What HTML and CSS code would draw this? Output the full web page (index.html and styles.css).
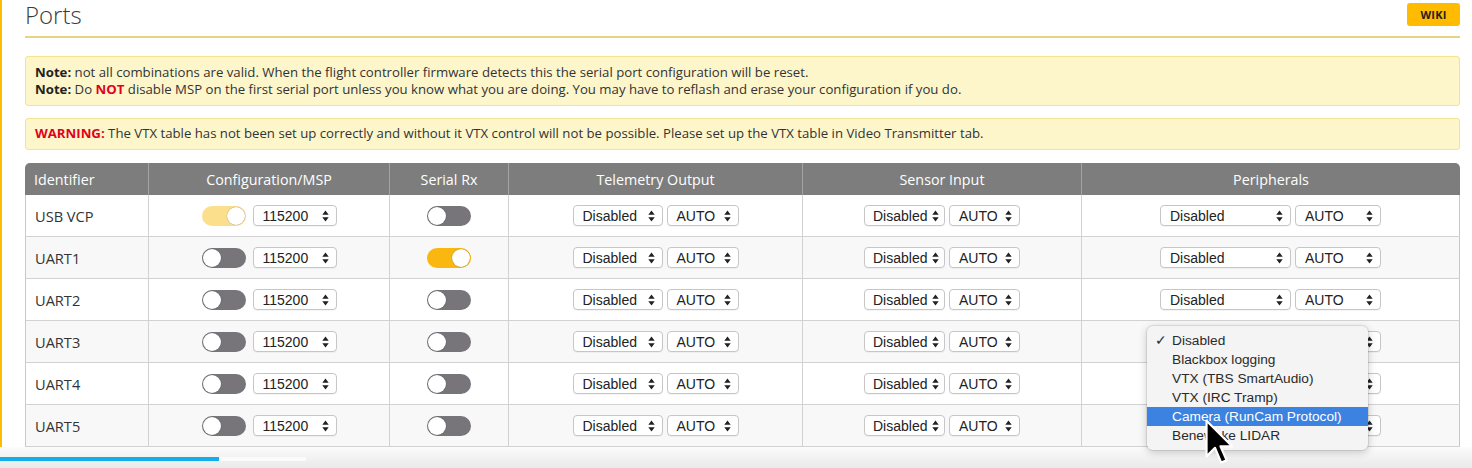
FILE: index.html
```html
<!DOCTYPE html>
<html>
<head>
<meta charset="utf-8">
<link rel="stylesheet" href="styles.css">
</head>
<body>
<div class="page">
  <div class="frame">
    <div class="titlebar">
      <div class="title">Ports</div>
      <div class="wiki">WIKI</div>
    </div>
    <div class="note">
      <div><b>Note:</b> not all combinations are valid. When the flight controller firmware detects this the serial port configuration will be reset.</div>
      <div><b>Note:</b> Do <b class="red">NOT</b> disable MSP on the first serial port unless you know what you are doing. You may have to reflash and erase your configuration if you do.</div>
    </div>
    <div class="note warn">
      <div><b class="red">WARNING:</b> The VTX table has not been set up correctly and without it VTX control will not be possible. Please set up the VTX table in Video Transmitter tab.</div>
    </div>
    <table class="ports">
      <colgroup>
        <col class="c1"><col class="c2"><col class="c3"><col class="c4"><col class="c5"><col>
      </colgroup>
      <thead>
        <tr><th class="left">Identifier</th><th>Configuration/MSP</th><th>Serial Rx</th><th>Telemetry Output</th><th>Sensor Input</th><th>Peripherals</th></tr>
      </thead>
      <tbody id="rows"></tbody>
    </table>
  </div>
  <div class="bottom">
    <div class="progress"><div class="played"></div><div class="buffered"></div></div>
  </div>

  <div class="menu">
    <div class="item"><span class="check">✓</span>Disabled</div>
    <div class="item">Blackbox logging</div>
    <div class="item">VTX (TBS SmartAudio)</div>
    <div class="item">VTX (IRC Tramp)</div>
    <div class="item active">Camera (RunCam Protocol)</div>
    <div class="item">Benewake LIDAR</div>
  </div>
  <svg class="cursor" width="34" height="50" viewBox="0 0 22 32">
    <path d="M1 1 L1 24 L6.5 18.5 L10.5 28 L14 26.5 L10 17.5 L17.5 17.5 Z" fill="#000" stroke="#fff" stroke-width="1.4" stroke-linejoin="round"/>
  </svg>
</div>
<script src="app.js"></script>
</body>
</html>
```

FILE: app.js
```js
const arrows = '<svg class="arr" width="7" height="12" viewBox="0 0 7 12"><path d="M3.5 0.5 L6.7 4.7 L0.3 4.7 Z M3.5 11.5 L6.7 7.3 L0.3 7.3 Z" fill="#222"/></svg>';
function sel(text, w, cls) {
  return '<div class="sel' + (cls ? ' ' + cls : '') + '" style="width:' + w + 'px"><span>' + text + '</span>' + arrows + '</div>';
}
function tog(state) {
  return '<div class="tog ' + state + '"><div class="knob"></div></div>';
}
const rows = [
  ['USB VCP', 'dis-on', 'off'],
  ['UART1', 'off', 'on'],
  ['UART2', 'off', 'off'],
  ['UART3', 'off', 'off'],
  ['UART4', 'off', 'off'],
  ['UART5', 'off', 'off']
];
let html = '';
for (const r of rows) {
  html += '<tr>' +
    '<td class="left">' + r[0] + '</td>' +
    '<td><div class="grp g7">' + tog(r[1]) + sel('115200', 84) + '</div></td>' +
    '<td><div class="grp">' + tog(r[2]) + '</div></td>' +
    '<td><div class="grp">' + sel('Disabled', 90) + sel('AUTO', 72) + '</div></td>' +
    '<td><div class="grp">' + sel('Disabled', 81, 'tight') + sel('AUTO', 71) + '</div></td>' +
    '<td><div class="grp">' + sel('Disabled', 131) + sel('AUTO', 86) + '</div></td>' +
    '</tr>';
}
document.getElementById('rows').innerHTML = html;
```

FILE: styles.css
```css
* { box-sizing: border-box; }
html, body { margin: 0; padding: 0; }
body {
  width: 1472px;
  height: 468px;
  overflow: hidden;
  background: #fff;
  font-family: "Open Sans", "Liberation Sans", sans-serif;
  color: #333;
}
.page {
  position: relative;
  width: 1472px;
  height: 468px;
  display: flex;
  flex-direction: column;
}
.frame {
  height: 447px;
  border-left: 2px solid #ffbb00;
  padding: 0 12px 0 23px;
  display: flex;
  flex-direction: column;
}
.titlebar {
  height: 38px;
  border-bottom: 2px solid #e6d57e;
  display: flex;
  justify-content: space-between;
  align-items: flex-start;
}
.title {
  font-size: 24px;
  font-weight: 300;
  color: #3c3c3c;
  line-height: 30px;
}
.wiki {
  margin-top: 3px;
  width: 53px;
  height: 23px;
  background: #ffbb00;
  border-radius: 3px;
  font-size: 11px;
  font-weight: 700;
  color: #222;
  display: flex;
  align-items: center;
  justify-content: center;
  letter-spacing: 0.2px;
}
.note {
  margin-top: 18px;
  background: #fef6cb;
  border: 1px solid #f4e38f;
  border-radius: 3px;
  padding: 7px 9px;
  font-size: 13.2px;
  line-height: 17px;
  color: #333;
}
.note b { font-weight: 700; color: #222; }
.note b.red { color: #e2001a; }
.warn { margin-top: 12px; padding: 6px 9px 7px; }
table.ports {
  margin-top: 13px;
  width: 1435px;
  border-collapse: separate;
  border-spacing: 0;
  table-layout: fixed;
  font-size: 14.6px;
  color: #333;
}
.c1 { width: 123px; }
.c2 { width: 241px; }
.c3 { width: 119px; }
.c4 { width: 294px; }
.c5 { width: 279px; }
.ports th {
  background: #7c7d7c;
  color: #fff;
  font-weight: 400;
  height: 32px;
  font-size: 14.3px;
  text-align: center;
  border-left: 1px solid #a3a3a3;
  padding: 0;
}
.ports th:first-child { border-left: none; border-top-left-radius: 5px; }
.ports th:last-child { border-top-right-radius: 5px; }
.ports th.left, .ports td.left { text-align: left; padding-left: 9px; }
.ports td {
  height: 42px;
  padding: 0;
  border-left: 1px solid #d2d2d2;
  border-bottom: 1px solid #d2d2d2;
  text-align: center;
}
.ports td:first-child { border-left: 1px solid #c9c9c9; }
.ports td:last-child { border-right: 1px solid #c9c9c9; }
.ports tbody tr:nth-child(even) td { background: #f8f8f8; }
.grp {
  display: flex;
  justify-content: center;
  align-items: center;
  gap: 4px;
}
.grp.g7 { gap: 7px; }
.tog {
  position: relative;
  width: 44px;
  height: 20px;
  border-radius: 10px;
  background: #77747a;
}
.tog .knob {
  position: absolute;
  top: 1px;
  left: 1px;
  width: 18px;
  height: 18px;
  border-radius: 50%;
  background: #fff;
  box-shadow: 0 0 1px rgba(0,0,0,0.5);
}
.tog.on { background: #f9b70f; }
.tog.on .knob, .tog.dis-on .knob { left: 25px; }
.tog.dis-on { background: #fcdf8c; }
.sel {
  height: 21px;
  border: 1px solid #c6c6c6;
  border-radius: 4px;
  background: #fff;
  display: flex;
  align-items: center;
  justify-content: space-between;
  padding: 0 7px 0 9px;
  font-family: "Liberation Sans", Arial, sans-serif;
  font-size: 14px;
  color: #222;
  box-shadow: 0 1px 0 rgba(0,0,0,0.04);
}
.sel.tight { padding: 0 5px 0 8px; }
.sel .arr { flex: none; }
.bottom {
  flex: 1;
  background: linear-gradient(#fbfbfb, #e9e9e9);
  position: relative;
}
.progress {
  position: absolute;
  left: 0;
  top: 10px;
  height: 4px;
  width: 306px;
  display: flex;
}
.played { width: 219px; background: #12aee9; }
.buffered { flex: 1; background: rgba(255,255,255,0.7); }
.menu {
  position: absolute;
  left: 1147px;
  top: 326px;
  width: 221px;
  padding: 5px 0 5px;
  background: #f4f4f4;
  border-radius: 6px;
  box-shadow: 0 2px 8px rgba(0,0,0,0.22), 0 0 0 1px rgba(0,0,0,0.08);
  font-family: "Liberation Sans", Arial, sans-serif;
  font-size: 13.7px;
  color: #2a2a2a;
}
.item {
  position: relative;
  height: 19px;
  line-height: 19px;
  padding-left: 25px;
}
.item .check {
  position: absolute;
  left: 8px;
  top: 0;
  font-size: 14px;
}
.item.active { background: #3b82e1; color: #fff; }
.cursor {
  position: absolute;
  left: 1205px;
  top: 419px;
}
```
